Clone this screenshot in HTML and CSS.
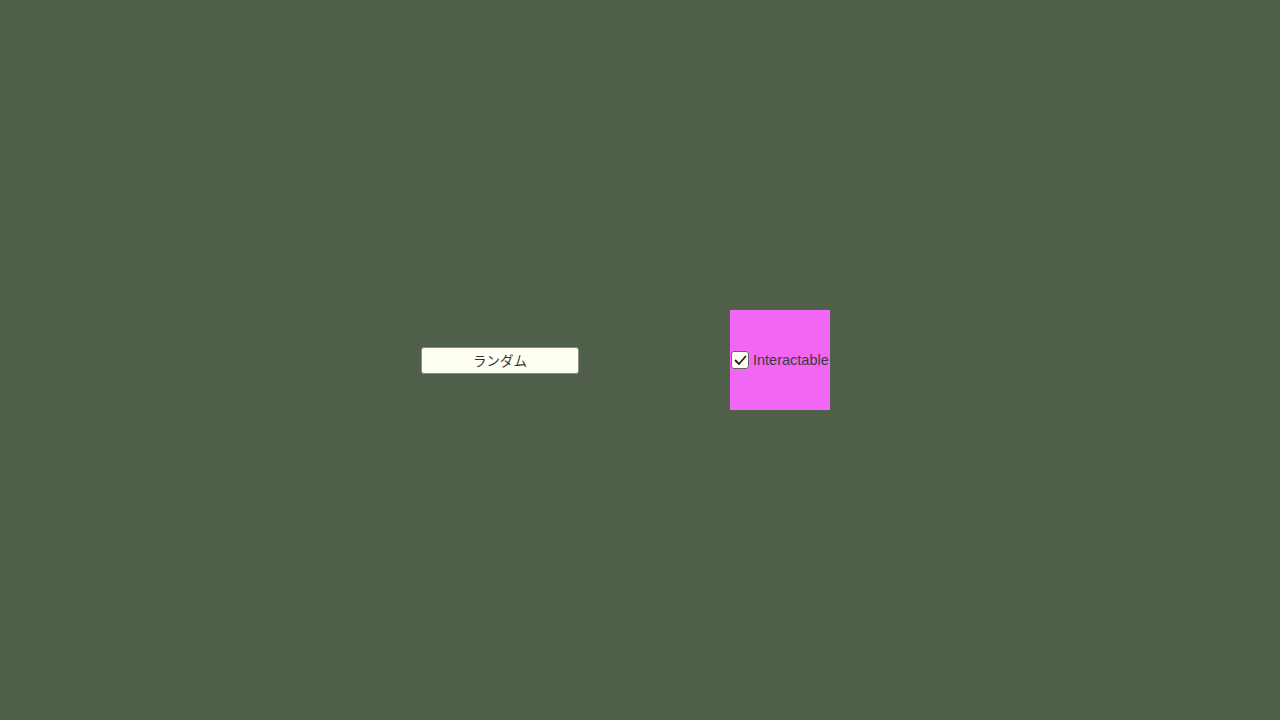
FILE: index.html
```html
<!DOCTYPE html>
<html lang="ja">
<head>
<meta charset="utf-8">
<link rel="stylesheet" href="styles.css">
</head>
<body>
<div class="stage">
  <button class="btn">ランダム</button>
  <div class="panel">
    <label class="toggle">
      <span class="box"><svg width="13" height="11" viewBox="0 0 13 11"><path d="M1.5 5.5 L5 9 L11.5 1.5" fill="none" stroke="#222" stroke-width="1.8" stroke-linecap="round" stroke-linejoin="round"/></svg></span>
      <span class="label">Interactable</span>
    </label>
  </div>
</div>
</body>
</html>
```
FILE: styles.css
```css
html, body {
  margin: 0;
  height: 100%;
}
body {
  background: #505f4a;
  font-family: "Liberation Sans", "Noto Sans CJK JP", sans-serif;
}
.stage {
  height: 720px;
  display: flex;
  align-items: center;
  padding-left: 421px;
  box-sizing: border-box;
}
.btn {
  width: 158px;
  height: 27px;
  margin: 0 151px 0 0;
  padding: 0;
  background: #fffff4;
  border: 1px solid #8a8a80;
  border-radius: 3px;
  font-family: "Noto Sans CJK JP", sans-serif;
  font-size: 13.5px;
  color: #333;
}
.panel {
  width: 100px;
  height: 100px;
  background: #f266f6;
  display: flex;
  align-items: center;
}
.toggle {
  display: flex;
  align-items: center;
  gap: 4px;
  padding-left: 1px;
}
.box {
  width: 18px;
  height: 18px;
  background: #fffff4;
  border: 1px solid #666;
  border-radius: 3px;
  display: flex;
  align-items: center;
  justify-content: center;
  box-sizing: border-box;
}
.label {
  font-size: 14.5px;
  color: #3a3a3a;
}
```
